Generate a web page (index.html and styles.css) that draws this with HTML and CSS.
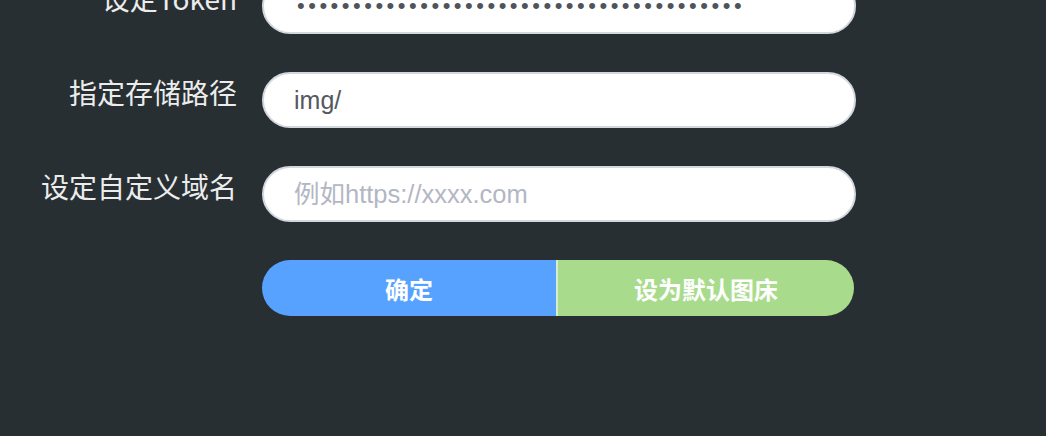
FILE: index.html
```html
<!DOCTYPE html>
<html lang="zh">
<head>
<meta charset="utf-8">
<link rel="stylesheet" href="styles.css">
</head>
<body>
<div class="page">
  <form class="form">
    <div class="row">
      <label class="label">设定Token</label>
      <input class="field pw" type="password" value="aaaaaaaaaaaaaaaaaaaaaaaaaaaaaaaaaaaaaaaa">
    </div>
    <div class="row">
      <label class="label">指定存储路径</label>
      <input class="field" type="text" value="img/">
    </div>
    <div class="row">
      <label class="label">设定自定义域名</label>
      <input class="field" type="text" placeholder="例如https://xxxx.com">
    </div>
    <div class="row">
      <span class="label"></span>
      <div class="btns">
        <button type="button" class="btn btn-ok">确定</button>
        <button type="button" class="btn btn-default">设为默认图床</button>
      </div>
    </div>
  </form>
</div>
</body>
</html>
```

FILE: styles.css
```css
html, body {
  margin: 0;
  padding: 0;
  background: #272f33;
  height: 100%;
  overflow: hidden;
}
.form {
  margin-top: -22px;
  display: flex;
  flex-direction: column;
  gap: 38px;
}
.row {
  display: flex;
  align-items: flex-start;
}
.label {
  width: 237px;
  flex: none;
  text-align: right;
  padding-right: 25px;
  height: 40px;
  line-height: 40px;
  font-family: "Noto Sans CJK SC", "Liberation Sans", sans-serif;
  font-size: 28px;
  color: #ececec;
  white-space: nowrap;
}
.field {
  box-sizing: border-box;
  width: 594px;
  height: 56px;
  border: 2px solid #d3d7df;
  border-radius: 28px;
  background: #fff;
  padding: 0 30px;
  font-family: "Liberation Sans", "Noto Sans CJK SC", sans-serif;
  font-size: 25px;
  color: #55585f;
  outline: none;
}
.field::placeholder {
  color: #b3b6c3;
  font-size: 25.5px;
}
.pw {
  font-size: 22px;
  letter-spacing: 3.5px;
  padding-left: 33px;
  color: #4f535a;
}
.btns {
  display: flex;
  width: 592px;
  height: 56px;
  border-radius: 28px;
  overflow: hidden;
}
.btn {
  border: none;
  margin: 0;
  padding: 0;
  height: 56px;
  font-family: "Noto Sans CJK SC", "Liberation Sans", sans-serif;
  font-weight: bold;
  font-size: 24px;
  color: #fff;
  cursor: pointer;
}
.btn-ok {
  width: 294px;
  background: #56a2fe;
}
.btn-default {
  flex: 1;
  background: #a8dc8c;
  border-left: 2px solid #d8ecd0;
}
```
